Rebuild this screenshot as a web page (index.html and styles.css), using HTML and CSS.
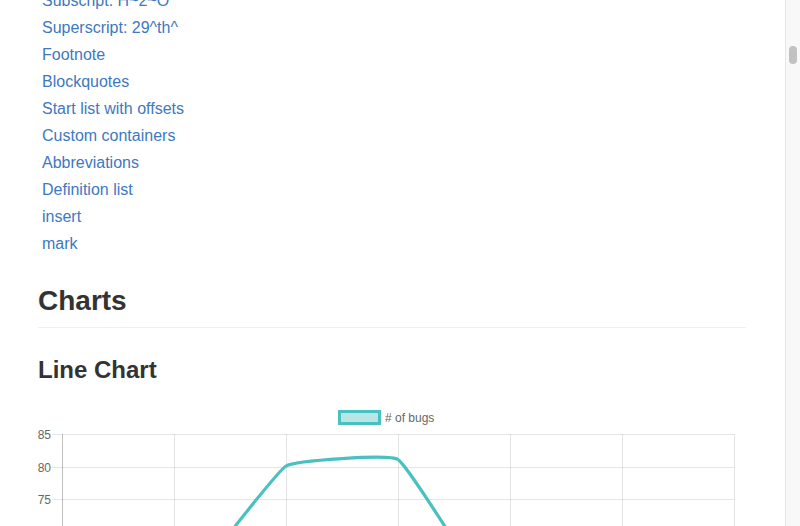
FILE: index.html
```html
<!DOCTYPE html>
<html lang="en">
<head>
<meta charset="utf-8">
<title>Markdown demo</title>
<link rel="stylesheet" href="styles.css">
</head>
<body>
<div class="viewport">
  <main class="content">
    <article class="article">
      <ul class="toc">
        <li><a href="#">Subscript: H~2~O</a></li>
        <li><a href="#">Superscript: 29^th^</a></li>
        <li><a href="#">Footnote</a></li>
        <li><a href="#">Blockquotes</a></li>
        <li><a href="#">Start list with offsets</a></li>
        <li><a href="#">Custom containers</a></li>
        <li><a href="#">Abbreviations</a></li>
        <li><a href="#">Definition list</a></li>
        <li><a href="#">insert</a></li>
        <li><a href="#">mark</a></li>
      </ul>
      <h1 class="h1">Charts</h1>
      <h2 class="h2">Line Chart</h2>
      <svg class="chart" width="708" height="360" viewBox="0 0 708 360">
        <g class="legend">
          <rect x="301.5" y="16.5" width="40" height="12" fill="rgba(75,192,192,0.4)" stroke="#4bc0c0" stroke-width="3"/>
          <text x="347" y="27" class="chart-text">&#35; of bugs</text>
        </g>
        <g class="grid" stroke="rgba(0,0,0,0.1)" stroke-width="1">
          <line x1="14" y1="39.5" x2="696.5" y2="39.5"/>
          <line x1="14" y1="72.5" x2="696.5" y2="72.5"/>
          <line x1="14" y1="104.5" x2="696.5" y2="104.5"/>
          <line x1="14" y1="136.5" x2="696.5" y2="136.5"/>
          <line x1="14" y1="169.5" x2="696.5" y2="169.5"/>
          <line x1="14" y1="201.5" x2="696.5" y2="201.5"/>
          <line x1="14" y1="234.5" x2="696.5" y2="234.5"/>
          <line x1="14" y1="266.5" x2="696.5" y2="266.5"/>
          <line x1="14" y1="299.5" x2="696.5" y2="299.5"/>
          <line x1="14" y1="331.5" x2="696.5" y2="331.5"/>
          <line x1="136.5" y1="39" x2="136.5" y2="342"/>
          <line x1="248.5" y1="39" x2="248.5" y2="342"/>
          <line x1="360.5" y1="39" x2="360.5" y2="342"/>
          <line x1="472.5" y1="39" x2="472.5" y2="342"/>
          <line x1="584.5" y1="39" x2="584.5" y2="342"/>
          <line x1="696.5" y1="39" x2="696.5" y2="342"/>
        </g>
        <line x1="24.5" y1="39" x2="24.5" y2="342" stroke="rgba(0,0,0,0.25)" stroke-width="1"/>
        <g class="chart-text" text-anchor="end">
          <text x="13" y="44">85</text>
          <text x="13" y="77">80</text>
          <text x="13" y="109">75</text>
        </g>
        <path d="M24,168.5 C35.2,172.4 132.4,209.1 136,207.5 C141.36,205.17 234.3,79.74 248,71 C256.7,65.44 351.88,58.85 360,64.5 C374.28,74.45 457.72,216.22 472,227 C480.12,233.12 574.36,229.02 584,233.5 C596.76,239.42 684.8,321.25 696,331" fill="none" stroke="#4bc0c0" stroke-width="3.2" stroke-linejoin="round" stroke-linecap="round"/>
      </svg>
    </article>
  </main>
  <div class="scrollbar"><div class="thumb"></div></div>
</div>
</body>
</html>
```

FILE: styles.css
```css
html, body {
  margin: 0;
  padding: 0;
  background: #fff;
}

body {
  font-family: "Liberation Sans", Helvetica, Arial, sans-serif;
  color: #333;
}

.viewport {
  display: flex;
  height: 526px;
  overflow: hidden;
}

.content {
  flex: 1;
  overflow: hidden;
}

.article {
  width: 708px;
  padding-left: 38px;
}

.toc {
  list-style: none;
  margin: -13px 0 0;
  padding: 0 0 0 4px;
}

.toc li {
  font-size: 16px;
  line-height: 27px;
}

.toc a {
  color: #4078c0;
  text-decoration: none;
}

.h1 {
  margin: 27px 0 0;
  font-size: 28px;
  line-height: 34px;
  font-weight: bold;
  padding-bottom: 9px;
  border-bottom: 1px solid #eee;
  color: #333;
}

.h2 {
  margin: 27px 0 0;
  font-size: 24px;
  line-height: 29px;
  font-weight: bold;
  color: #333;
}

.chart {
  display: block;
  margin-top: 11px;
}

.chart-text {
  font-family: "Liberation Sans", Helvetica, Arial, sans-serif;
  font-size: 12px;
  fill: #666;
}

.scrollbar {
  width: 14px;
  flex: 0 0 14px;
  background: #f8f8f8;
  border-left: 1px solid #e6e6e6;
  padding-top: 46px;
  box-sizing: content-box;
}

.thumb {
  width: 8px;
  height: 18px;
  margin-left: 3px;
  border-radius: 4px;
  background: #c1c1c1;
}
```
